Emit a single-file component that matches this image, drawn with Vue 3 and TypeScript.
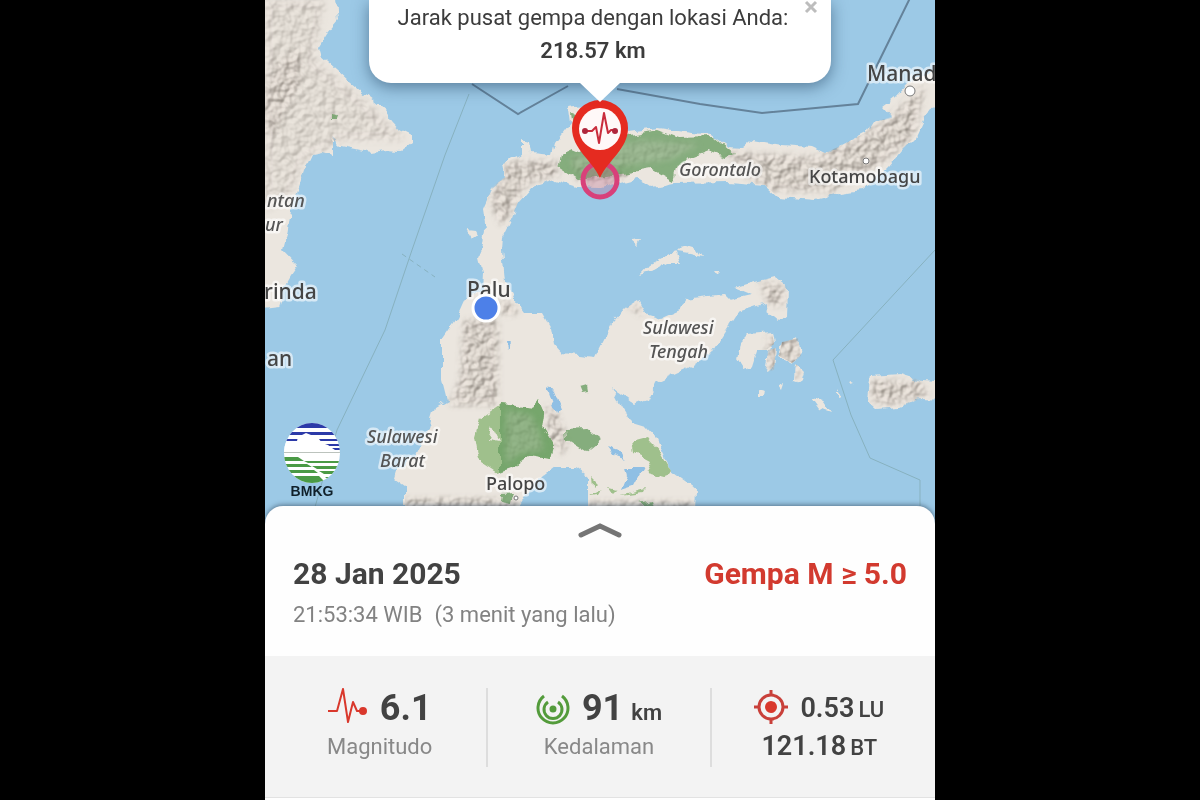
<script setup lang="ts">
import { ref } from 'vue'

interface MapLabel {
  text: string
  x: number
  y: number
  size: number
  kind: 'city' | 'region'
}

const labels: MapLabel[] = [
  { text: 'Manad', x: 867, y: 81, size: 21, kind: 'city' },
  { text: 'Kotamobagu', x: 809, y: 183, size: 18, kind: 'city' },
  { text: 'Palu', x: 467, y: 297, size: 21, kind: 'city' },
  { text: 'Palopo', x: 486, y: 490, size: 18, kind: 'city' },
  { text: 'rinda', x: 264, y: 299, size: 21, kind: 'city' },
  { text: 'an', x: 267, y: 366, size: 21, kind: 'city' },
  { text: 'Gorontalo', x: 679, y: 176, size: 18, kind: 'region' },
  { text: 'ntan', x: 267, y: 207, size: 18, kind: 'region' },
  { text: 'ur', x: 265, y: 231, size: 18, kind: 'region' },
  { text: 'Sulawesi', x: 643, y: 334, size: 18, kind: 'region' },
  { text: 'Tengah', x: 649, y: 358, size: 18, kind: 'region' },
  { text: 'Sulawesi', x: 367, y: 443, size: 18, kind: 'region' },
  { text: 'Barat', x: 380, y: 467, size: 18, kind: 'region' },
]

const popupOpen = ref(true)
const expanded = ref(false)
</script>

<template>
  <main class="screen">
    <section class="map" aria-label="Peta gempa">
      <svg class="map-canvas" viewBox="265 0 670 530" preserveAspectRatio="xMidYMin slice">
        <defs>
          <filter id="coast" x="-5%" y="-5%" width="110%" height="110%">
            <feTurbulence type="fractalNoise" baseFrequency="0.09" numOctaves="2" seed="4" result="n" />
            <feDisplacementMap in="SourceGraphic" in2="n" scale="9" xChannelSelector="R" yChannelSelector="G" />
          </filter>
          <filter id="relief" x="-5%" y="-5%" width="110%" height="110%" color-interpolation-filters="sRGB">
            <feTurbulence type="fractalNoise" baseFrequency="0.12" numOctaves="2" seed="11" result="n" />
            <feDiffuseLighting in="n" surfaceScale="3" lighting-color="#ffffff" result="lit">
              <feDistantLight azimuth="225" elevation="52" />
            </feDiffuseLighting>
            <feColorMatrix
              in="lit"
              type="matrix"
              values="0.5 0 0 0 0.43  0 0.5 0 0 0.40  0 0 0.5 0 0.37  0 0 0 1 0"
              result="tint"
            />
            <feGaussianBlur in="SourceAlpha" stdDeviation="3" result="soft" />
            <feComposite in="tint" in2="soft" operator="in" />
          </filter>
          <clipPath id="landClip">
            <use href="#kalimantan" />
            <use href="#sulawesi" />
            <use href="#taliabu" />
            <use href="#banggai" />
          </clipPath>
          <path
            id="kalimantan"
            d="M255-10H335L338 20 328 32 318 48 320 55 335 68 350 82 362 92 374 101 385 110 393 122 400 130 412 136 412 143 400 152 385 151 372 153 355 149 340 146 331 138 326 128 333 142 333 156 322 153 312 155 305 170 300 185 296 196 291 210 287 235 283 250 298 266 291 276 283 290 278 306 255 309Z"
          />
          <path
            id="sulawesi"
            d="M482 250 485 230 482 210 492 187 505 177 503 163 522 155 522 140 528 142 530 153 552 155 555 143 570 123 568 108 600 104 628 132 658 128 685 132 712 135 728 147 742 148 752 140 782 145 812 147 825 153 842 145 865 133 872 122 892 117 883 107 895 98 912 80 945 66V104L932 108 923 120 915 137 902 150 888 167 862 190 842 193 815 200 778 197 765 185 728 182 675 183 652 187 638 178 618 183 600 188 578 187 555 180 532 187 518 203 510 223 503 237 502 250 505 280 515 300 525 313 542 313 550 327 553 343 562 353 595 357 612 323 625 308 638 300 645 313 662 318 680 310 685 300 725 295 730 300 752 295 735 288 755 282 775 277 788 287 787 317 778 321 767 312 765 303 738 312 725 332 712 353 688 368 655 383 647 400 635 405 612 387 620 403 632 423 645 427 657 440 665 457 670 470 695 488 693 535H588V477L575 467 555 467 542 477 528 490 518 507V535H405V487L395 480 398 470 415 457 428 430 435 407 447 400 442 380 442 340 458 317 467 297 482 290 483 273 479 257Z"
          />
          <path id="taliabu" d="M871 376 900 374 920 380 945 382V400L920 399 900 407 876 409 868 402 869 388Z" />
          <path
            id="banggai"
            d="M740 342 748 334 772 332 774 344 766 350 757 350 752 366 744 369 737 358ZM768 350 776 348 774 370 765 374ZM782 342 798 338 801 356 792 363 779 356ZM796 364 804 372 801 382 795 380Z"
          />
        </defs>

        <rect x="265" width="670" height="530" fill="#9cc9e6" />

        <g class="land" filter="url(#coast)">
          <use href="#kalimantan" />
          <use href="#sulawesi" />
          <use href="#taliabu" />
          <use href="#banggai" />
          <path d="M467 229 475 230 479 237 473 239Z" />
          <path d="M641 274 650 264 664 257 677 253 681 263 668 263 655 270Z" />
          <path d="M676 252 682 246 698 251 702 257 690 254Z" />
          <path d="M632 240 641 239 638 245Z" />
          <path d="M758 389 766 391 765 397 758 397ZM779 384 784 382 782 388ZM812 397 823 400 831 412 820 408Z" />
          <path d="M715 271 722 271 718 275ZM838 390 841 396 838 397ZM851 384 855 386 850 387Z" />
        </g>

        <g clip-path="url(#landClip)">
          <g class="relief-light" filter="url(#relief)">
            <path d="M265 0H325L315 60 370 105 405 140 345 140 305 160 290 200 265 210Z" />
          </g>
          <g class="relief" filter="url(#relief)">
            <path d="M275 65 300 48 300 85 285 110 275 135 265 130V90Z" />
            <path d="M508 162 555 160 560 175 528 183 510 215 500 225 490 200Z" />
            <path d="M725 152 820 157 880 125 925 85 915 135 880 165 830 192 770 190 745 175Z" />
            <path d="M464 320H498V405H450L460 380Z" />
            <path d="M570 165 630 165 625 182 580 182Z" />
            <path d="M545 405 555 410 568 440 562 455 550 440Z" />
            <path d="M760 282 782 285 785 305 768 305Z" />
            <path d="M628 306 642 305 641 316Z" />
            <path d="M872 380 920 382 930 395 890 405 872 402Z" />
            <path d="M768 336 800 340 798 378 765 365Z" />
            <path d="M405 499H515V520H405ZM590 502H692V520H590Z" />
            <path d="M502 297 520 312 502 316Z" />
          </g>
        </g>

        <g class="lake" filter="url(#coast)">
          <path d="M547 388 554 390 561 408 556 413Z" />
          <path d="M624 467 644 467 634 486 621 490 626 477Z" />
          <path d="M607 447 622 452 626 460 614 456Z" />
          <path d="M507 343 511 343 508 348Z" />
        </g>

        <g filter="url(#coast)">
          <path
            class="forest"
            fill-rule="evenodd"
            d="M500 404 532 408 538 399 544 413 542 428 553 447 550 459 530 456 517 466 497 472 479 460 475 437 480 418ZM492 427 488 439 499 441Z"
          />
          <path class="forest-dark" d="M500 404 532 408 538 399 544 413 542 428 553 447 550 459 530 456 517 466 500 472Z" />
          <path
            class="forest-dark"
            d="M560 155 573 149 588 155 630 135 657 130 678 138 714 137 734 154 725 157 708 151 690 158 678 165 674 181 652 169 622 174 578 179 558 166Z"
          />
          <path class="forest-dark" d="M571 112 578 115 573 127ZM566 430 586 429 601 440 586 452 567 440Z" />
          <path class="forest" d="M632 441 647 437 660 452 670 469 664 478 645 473 651 462 634 453Z" />
          <path class="forest-dark" d="M580 388 587 386 588 392 582 393ZM331 115 338 116 337 119 331 119Z" />
          <path class="forest" d="M592 477 598 483 593 488ZM608 488 616 490 612 494ZM620 495 645 488 643 492ZM590 496 603 490 600 495Z" />
          <path class="forest-dark" d="M501 494 514 493 511 503 500 501ZM640 503 652 500 654 507Z" />
        </g>

        <g class="forest-relief" filter="url(#relief)">
          <path d="M506 410 530 414 538 428 544 450 520 454 506 464Z" />
          <path d="M570 158 640 140 700 144 670 160 620 166 575 172Z" />
        </g>

        <g class="border-strong">
          <path d="M472 84 518 114 568 86" />
          <path d="M617 89 700 104 762 113 858 104 912-6" />
        </g>
        <g class="border-faint">
          <path d="M469 94 445 155 412 250 385 330 337 430 315 507" />
          <path d="M935 250 833 360 851 415 870 458 920 480V510" />
          <path d="M402 254 435 277" stroke-dasharray="5 4" />
        </g>

        <g class="towns">
          <circle cx="910" cy="91" r="5" />
          <circle cx="866" cy="161" r="3" />
          <circle cx="516" cy="498" r="2" />
        </g>

        <text
          v-for="(label, index) in labels"
          :key="index"
          :class="label.kind"
          :x="label.x"
          :y="label.y"
          :font-size="label.size"
        >{{ label.text }}</text>

        <circle class="user-dot" cx="486" cy="308" r="13" />

        <circle class="epicenter" cx="600" cy="180" r="17" />
        <g>
          <path d="M600 178C592 160 572 149 572 128A28 28 0 0 1 628 128C628 149 608 160 600 178Z" fill="#e52b20" />
          <circle cx="600" cy="129" r="21" fill="#fff8f8" />
          <path class="pin-pulse" d="M585 131H592L596 127 599 143 604 113 608 133 611 130H615" />
          <circle cx="585" cy="131" r="3" fill="#b0263c" />
          <circle cx="615" cy="131" r="3" fill="#b0263c" />
        </g>
      </svg>

      <div v-if="popupOpen" class="popup" role="dialog" aria-label="Jarak gempa">
        <p>Jarak pusat gempa dengan lokasi Anda:</p>
        <p><strong>218.57 km</strong></p>
        <button class="close" type="button" aria-label="Tutup" @click="popupOpen = false">
          <svg viewBox="0 0 14 14"><path d="M2 2 12 12M12 2 2 12" /></svg>
        </button>
      </div>

      <div class="brand">
        <svg viewBox="0 0 56 60">
          <defs>
            <clipPath id="logoClip"><ellipse cx="28" cy="30" rx="28" ry="30" /></clipPath>
          </defs>
          <g clip-path="url(#logoClip)">
            <rect width="56" height="60" fill="#ffffff" />
            <path d="M0 0H56V5H0ZM0 9H56V12H0ZM0 16H56V18H0ZM34 21H56V23H34ZM44 25H56V27H44Z" fill="#2c3aa8" />
            <path d="M0 29V20L5 18 13 18 14 14 18 12 22 10 27 12 31 15 35 16 38 20 44 22 48 25 54 29Z" fill="#ffffff" />
            <path d="M0 29H56V30H0Z" fill="#bcc3bd" />
            <path d="M0 34H14L20 38H0ZM20 38H56V40H24ZM0 41H23L28 44H0ZM28 43H56V46H33ZM0 47H30L34 50H0ZM35 48H56V51H40ZM4 53H35L42 60H10ZM41 54H56V58H46Z" fill="#4a9a45" />
          </g>
        </svg>
        <span>BMKG</span>
      </div>
    </section>

    <section class="sheet">
      <button
        class="handle"
        type="button"
        aria-label="Detail gempa"
        :aria-expanded="expanded"
        @click="expanded = !expanded"
      >
        <svg viewBox="0 0 44 16"><path d="M3 13 22 4 41 13" /></svg>
      </button>

      <header class="summary">
        <div class="title-row">
          <h1>28 Jan 2025</h1>
          <h2>Gempa M ≥ 5.0</h2>
        </div>
        <p class="time"><span>21:53:34 WIB</span><span>(3 menit yang lalu)</span></p>
      </header>

      <div class="stats">
        <div class="stat magnitude">
          <div class="reading">
            <svg class="icon-pulse" viewBox="0 0 40 40">
              <path d="M0 23H9L15 1 20 34 25 14 29 23H36" />
              <circle cx="35" cy="23" r="3" />
            </svg>
            <strong>6.1</strong>
          </div>
          <span class="caption">Magnitudo</span>
        </div>
        <div class="stat">
          <div class="reading">
            <svg class="icon-depth" viewBox="0 0 34 40">
              <circle class="core" cx="17" cy="21" r="2" />
              <path d="M12 14A9 9 0 1 0 22 14" />
              <path d="M8 8A15 15 0 1 0 26 8" />
            </svg>
            <strong>91<small>km</small></strong>
          </div>
          <span class="caption">Kedalaman</span>
        </div>
        <div class="stat place">
          <div class="reading">
            <svg class="icon-target" viewBox="0 0 34 40">
              <circle cx="17" cy="19" r="12" />
              <circle class="core" cx="17" cy="19" r="6" />
              <path d="M17 2V7M17 31V36M0 19H5M29 19H34" />
            </svg>
            <strong>0.53<small>LU</small></strong>
          </div>
          <strong class="longitude">121.18<small>BT</small></strong>
        </div>
      </div>
    </section>
  </main>
</template>

<style>
body {
  margin: 0;
  background: #000000;
}
</style>

<style scoped>
.screen {
  display: flex;
  flex-direction: column;
  width: 100%;
  max-width: 670px;
  min-height: 100vh;
  margin: 0 auto;
  overflow: hidden;
  background: #fafafa;
  color: #424242;
  font-family: Roboto, "Liberation Sans", sans-serif;
}

.map {
  position: relative;
  flex: 1;
  min-height: 400px;
  overflow: hidden;
  background: #9cc9e6;
}

.map-canvas {
  position: absolute;
  inset: 0;
  width: 100%;
  height: 100%;
}

.land { fill: #ebe6df; }
.relief { opacity: 0.9; }
.relief-light { opacity: 0.5; }
.forest-relief { opacity: 0.25; }
.lake { fill: #8fbfe4; }
.forest { fill: #9fc08c; }
.forest-dark { fill: #6b9f64; opacity: 0.8; }

.border-strong {
  fill: none;
  stroke: #64829a;
  stroke-width: 2;
}

.border-faint {
  fill: none;
  stroke: #87b1bf;
  stroke-width: 1;
}

.towns {
  fill: #ffffff;
  stroke: #777777;
  stroke-width: 1;
}

.city,
.region {
  font-family: "Noto Sans", sans-serif;
  font-weight: 500;
  fill: #454545;
  stroke: rgba(255, 255, 255, 0.6);
  stroke-width: 5;
  stroke-linejoin: round;
  paint-order: stroke;
}

.region {
  font-style: italic;
  fill: #555555;
}

.user-dot {
  fill: #4d80e8;
  stroke: #ffffff;
  stroke-width: 3;
}

.epicenter {
  fill: rgba(190, 100, 140, 0.3);
  stroke: #d8407a;
  stroke-width: 5;
}

.pin-pulse {
  fill: none;
  stroke: #c92c3c;
  stroke-width: 2;
  stroke-linejoin: round;
}

.popup {
  position: absolute;
  top: 0;
  left: 50%;
  box-sizing: border-box;
  width: 462px;
  max-width: 94%;
  padding: 1px 40px 16px 26px;
  border-radius: 0 0 22px 22px;
  background: #ffffff;
  box-shadow: 0 4px 16px rgba(20, 50, 80, 0.5);
  transform: translateX(-50%);
  color: #3c3c3c;
  font-size: 22px;
  line-height: 33px;
  text-align: center;
}

.popup::after {
  position: absolute;
  top: 100%;
  left: 50%;
  width: 40px;
  height: 19px;
  margin-left: -20px;
  background: #ffffff;
  clip-path: polygon(0 0, 100% 0, 50% 100%);
  content: "";
}

.popup p {
  margin: 0;
  white-space: nowrap;
}

.popup strong {
  font-weight: 600;
}

.close {
  position: absolute;
  top: 0;
  right: 13px;
  width: 14px;
  height: 14px;
  padding: 0;
  border: 0;
  background: none;
  cursor: pointer;
}

.close svg {
  display: block;
  fill: none;
  stroke: #bdbdbd;
  stroke-width: 3;
}

.brand {
  position: absolute;
  bottom: 31px;
  left: 19px;
  display: flex;
  flex-direction: column;
  align-items: center;
  color: #10202a;
  font: 700 14px/16px "Liberation Sans", sans-serif;
}

.brand svg {
  width: 56px;
  height: 60px;
}

.sheet {
  position: relative;
  margin-top: -24px;
  border-radius: 18px 18px 0 0;
  background: #fefefe;
  box-shadow: 0 -1px 5px rgba(40, 60, 80, 0.6);
}

.handle {
  display: block;
  width: 100%;
  height: 48px;
  padding: 0;
  border: 0;
  background: none;
  cursor: pointer;
}

.handle svg {
  display: block;
  width: 44px;
  height: 16px;
  margin: 0 auto;
  fill: none;
  stroke: #757575;
  stroke-width: 5;
  stroke-linecap: round;
}

.summary {
  padding: 0 28px 20px;
}

.title-row {
  display: flex;
  justify-content: space-between;
}

h1,
h2 {
  margin: 0;
  font-size: 30px;
  font-weight: 700;
  line-height: 40px;
}

h2 {
  color: #d23a2f;
}

.time {
  display: flex;
  gap: 12px;
  margin: 0;
  color: #828282;
  font-size: 22px;
  line-height: 42px;
}

.stats {
  display: grid;
  grid-template-columns: repeat(3, 1fr);
  margin-bottom: 2px;
  padding: 32px 0 30px;
  border-bottom: 1px solid #e2e2e2;
  background: #f3f3f3;
}

.stat {
  display: flex;
  flex-direction: column;
  align-items: center;
  height: 79px;
}

.stat:not(:last-child) {
  border-right: 2px solid #dddddd;
}

.magnitude {
  padding-left: 8px;
}

.place {
  padding-right: 8px;
}

.reading {
  display: flex;
  align-items: center;
  gap: 12px;
  height: 40px;
}

.reading strong {
  display: flex;
  align-items: baseline;
  gap: 8px;
  font-size: 36px;
  line-height: 40px;
}

.reading small {
  font-size: 22px;
  font-weight: 600;
  line-height: 22px;
}

.caption {
  color: #888888;
  font-size: 22px;
  line-height: 38px;
}

.place .reading strong,
.longitude {
  display: flex;
  align-items: baseline;
  gap: 4px;
  font-size: 27px;
  font-weight: 600;
  line-height: 36px;
}

.place small {
  font-size: 22px;
  font-weight: 500;
}

.icon-pulse,
.icon-depth,
.icon-target {
  width: 34px;
  height: 40px;
  fill: none;
  stroke-width: 3;
}

.icon-pulse {
  width: 40px;
  stroke: #d9382c;
  stroke-width: 2;
  stroke-linejoin: round;
}

.icon-pulse circle { fill: #d9382c; }
.icon-depth { stroke: #539b3b; }
.icon-depth .core { fill: #539b3b; }
.icon-target { stroke: #c9403a; }
.icon-target .core { fill: #d9382c; stroke: none; }
</style>
